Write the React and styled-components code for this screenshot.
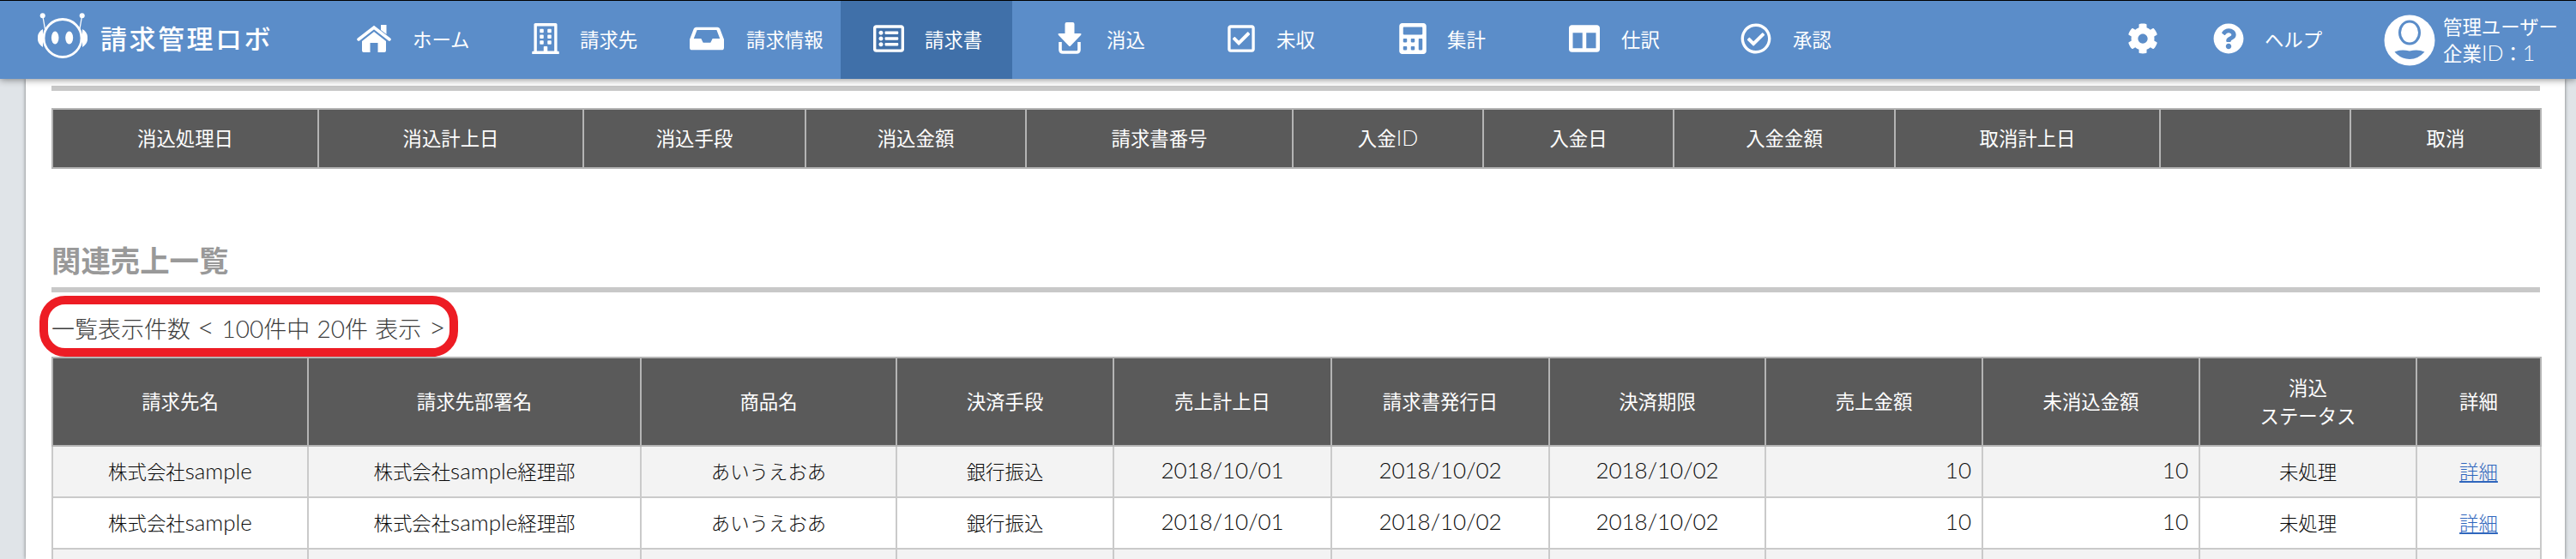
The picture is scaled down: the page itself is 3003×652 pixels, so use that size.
import React from "react";
import styled, { createGlobalStyle } from "styled-components";
import {
  FaRegBuilding,
  FaRegListAlt,
  FaRegCheckSquare,
  FaCalculator,
  FaColumns,
  FaRegCheckCircle,
  FaCog,
  FaQuestionCircle,
} from "react-icons/fa";

const GlobalStyle = createGlobalStyle`
  html, body {
    margin: 0;
    padding: 0;
    height: 652px;
    overflow: hidden;
    background: #e0e4e8;
    font-family: Lato, "Noto Sans CJK JP", sans-serif;
  }
`;

const Header = styled.header`
  position: relative;
  z-index: 2;
  height: 91px;
  display: flex;
  align-items: stretch;
  border-top: 1px solid #000;
  background: #5b8dc9;
  color: #fff;
  box-shadow: 0 1px 8px rgba(0, 0, 0, 0.45);
`;

const Logo = styled.div`
  width: 380px;
  box-sizing: border-box;
  padding: 0 0 6px 44px;
  display: flex;
  align-items: center;
  gap: 15px;
`;

const LogoText = styled.span`
  font-family: "Noto Sans CJK JP", sans-serif;
  font-size: 31px;
  font-weight: 500;
  letter-spacing: 2.5px;
  white-space: nowrap;
`;

const NavItem = styled.a`
  width: ${(props) => props.$w}px;
  box-sizing: border-box;
  padding-left: ${(props) => props.$pl || 36}px;
  padding-bottom: 4px;
  display: flex;
  align-items: center;
  gap: ${(props) => props.$gap}px;
  background: ${(props) => (props.$active ? "#4070a9" : "transparent")};
`;

const NavIcon = styled.span`
  width: 40px;
  display: flex;
  justify-content: center;
  font-size: 36px;
  line-height: 1;
`;

const NavLabel = styled.span`
  font-size: 22.4px;
  font-weight: 400;
  white-space: nowrap;
`;

const RightGroup = styled.div`
  margin-left: auto;
  padding-right: 21px;
  display: flex;
  align-items: center;
`;

const GearIcon = styled(NavIcon)`
  width: 36px;
  margin-right: 64px;
  padding-bottom: 4px;
`;

const HelpItem = styled.a`
  display: flex;
  align-items: center;
  gap: 24px;
  margin-right: 72px;
  padding-bottom: 4px;
`;

const HelpIcon = styled(NavIcon)`
  width: 36px;
`;

const User = styled.div`
  display: flex;
  align-items: center;
  gap: 9px;
`;

const UserText = styled.div`
  font-size: 22.4px;
  font-weight: 400;
  line-height: 31px;
  white-space: nowrap;
`;

const Panel = styled.main`
  margin: 0 13px 0 30px;
  padding: 8px 29px 0 30px;
  height: 552px;
  overflow: hidden;
  background: #fff;
  box-shadow: 0 0 4px rgba(0, 0, 0, 0.5);
`;

const Rule = styled.div`
  height: 6px;
  background: #c8c8c8;
`;

const Table = styled.table`
  width: 2901px;
  table-layout: fixed;
  border-collapse: collapse;
  margin-top: ${(props) => props.$mt || 0}px;
  font-size: 22.4px;
`;

const Head = styled.th`
  height: ${(props) => props.$h}px;
  padding: 0;
  background: #5a5a5a;
  border: 2px solid #b4b4b4;
  color: #fff;
  font-weight: 400;
  line-height: 33px;
`;

const Row = styled.tr`
  background: ${(props) => (props.$odd ? "#f3f3f3" : "#fff")};
`;

const Cell = styled.td`
  height: 56px;
  padding: 0 ${(props) => (props.$num ? "12px" : "0")} 2px 0;
  border: 2px solid #cacaca;
  color: #0a0a0a;
  font-weight: 300;
  text-align: ${(props) => (props.$num ? "right" : "center")};
`;

const Latin = styled.span`
  font-size: ${(props) => props.$size || 26}px;
  font-weight: 300;
  line-height: 1;
`;

const DetailLink = styled.a`
  color: #2f66bd;
  text-decoration: underline;
`;

const Title = styled.h2`
  margin: 84px 0 0;
  padding-bottom: 8px;
  border-bottom: 6px solid #c8c8c8;
  color: #999;
  font-size: 34.4px;
  font-weight: 700;
  line-height: 46px;
`;

const Pager = styled.div`
  width: fit-content;
  height: 48px;
  margin: 4px 0 0 -14px;
  padding: 3px 5px 0 4px;
  display: flex;
  align-items: center;
  border: 10px solid #ed1c24;
  border-radius: 30px;
  color: #3c3c3c;
  font-size: 27px;
  font-weight: 300;
  word-spacing: 1px;
  white-space: pre;
`;

const RobotLogo = () => (
  <svg width="58" height="58" viewBox="0 0 58 58">
    <circle cx="29" cy="29.5" r="22" fill="none" stroke="#fff" strokeWidth="2.8" />
    <path d="M6 19 A12 12 0 0 0 6 40 Z" fill="#fff" />
    <path d="M52 19 A12 12 0 0 1 52 40 Z" fill="#fff" />
    <ellipse cx="20.2" cy="29" rx="4.3" ry="7.5" fill="#fff" />
    <ellipse cx="36.7" cy="29" rx="4.5" ry="7.5" fill="#fff" />
    <circle cx="5.7" cy="3.2" r="3" fill="#fff" />
    <circle cx="51.7" cy="3.2" r="3" fill="#fff" />
    <path d="M5.7 3 L8.7 20 M51.7 3 L48.7 20" stroke="#fff" strokeWidth="1.3" />
  </svg>
);

const HomeIcon = () => (
  <svg width="40" height="32" viewBox="0 0 40 32">
    <path d="M2 17 L20 3 L38 17" fill="none" stroke="#fff" strokeWidth="3.6" strokeLinecap="round" />
    <path
      d="M6 19 L20 8 L34 19 V30 Q34 32 32 32 H24.5 V21 H15.5 V32 H8 Q6 32 6 30 Z"
      fill="#fff"
    />
    <path d="M28 0 H34.5 V11 L28 6 Z" fill="#fff" />
  </svg>
);

const InboxIcon = () => (
  <svg width="42" height="28" viewBox="0 0 42 28">
    <path
      fillRule="evenodd"
      d="M8 0 H34 Q36 0 37 2 L42 15 V25 Q42 28 39 28 H3 Q0 28 0 25 V15 L5 2 Q6 0 8 0 Z M9 3.5 L5 14 H14 L16.5 19 H25.5 L28 14 H37 L33 3.5 Z"
      fill="#fff"
    />
  </svg>
);

const ClearIcon = () => (
  <svg width="28" height="37" viewBox="0 0 28 37">
    <path
      d="M3 23 V32 Q3 35 6 35 H22 Q25 35 25 32 V23"
      fill="none"
      stroke="#fff"
      strokeWidth="3.6"
    />
    <path
      d="M8.5 2 Q8.5 0 10.5 0 H17.5 Q19.5 0 19.5 2 V13 H26 Q28.5 13 27 15 L15 27.5 Q14 28.5 13 27.5 L1 15 Q-0.5 13 2 13 H8.5 Z"
      fill="#fff"
    />
  </svg>
);

const AvatarIcon = () => (
  <svg width="60" height="60" viewBox="0 0 60 60">
    <circle cx="30" cy="30" r="29.5" fill="#fff" />
    <ellipse cx="30" cy="21" rx="11.5" ry="13" fill="none" stroke="#5b8dc9" strokeWidth="3" />
    <path
      d="M12.5 43.5 Q20 40 30 42.5 Q40 40 47.5 43.5 Q40 52 30 52 Q20 52 12.5 43.5 Z"
      fill="#5b8dc9"
    />
  </svg>
);

const navItems = [
  { label: "ホーム", icon: <HomeIcon />, w: 200, gap: 25 },
  { label: "請求先", icon: <FaRegBuilding />, w: 188, gap: 20 },
  { label: "請求情報", icon: <InboxIcon />, w: 212, gap: 26 },
  { label: "請求書", icon: <FaRegListAlt />, w: 200, gap: 22, active: true },
  { label: "消込", icon: <ClearIcon />, w: 211, gap: 23, pl: 47 },
  { label: "未収", icon: <FaRegCheckSquare />, w: 200, gap: 21 },
  { label: "集計", icon: <FaCalculator />, w: 200, gap: 20 },
  { label: "仕訳", icon: <FaColumns />, w: 200, gap: 23 },
  { label: "承認", icon: <FaRegCheckCircle />, w: 200, gap: 23 },
];

const clearingCols = [
  ["消込処理日", 310],
  ["消込計上日", 309],
  ["消込手段", 259],
  ["消込金額", 257],
  ["請求書番号", 311],
  [
    <>
      入金<Latin $size={25}>ID</Latin>
    </>,
    222,
  ],
  ["入金日", 222],
  ["入金金額", 258],
  ["取消計上日", 309],
  ["", 222],
  ["取消", 222],
];

const salesCols = [
  ["請求先名", 298],
  ["請求先部署名", 388],
  ["商品名", 298],
  ["決済手段", 253],
  ["売上計上日", 254],
  ["請求書発行日", 254],
  ["決済期限", 252],
  ["売上金額", 253],
  ["未消込金額", 253],
  [
    <>
      消込
      <br />
      ステータス
    </>,
    253,
  ],
  ["詳細", 145],
];

const salesRows = [1, 2];

const App = () => {
  return (
    <>
      <GlobalStyle />
      <Header>
        <Logo>
          <RobotLogo />
          <LogoText>請求管理ロボ</LogoText>
        </Logo>
        {navItems.map((item) => (
          <NavItem
            key={item.label}
            $w={item.w}
            $gap={item.gap}
            $pl={item.pl}
            $active={item.active}
          >
            <NavIcon>{item.icon}</NavIcon>
            <NavLabel>{item.label}</NavLabel>
          </NavItem>
        ))}
        <RightGroup>
          <GearIcon>
            <FaCog />
          </GearIcon>
          <HelpItem>
            <HelpIcon>
              <FaQuestionCircle />
            </HelpIcon>
            <NavLabel>ヘルプ</NavLabel>
          </HelpItem>
          <User>
            <AvatarIcon />
            <UserText>
              管理ユーザー
              <br />
              企業<Latin $size={25}>ID</Latin>：<Latin $size={25}>1</Latin>
            </UserText>
          </User>
        </RightGroup>
      </Header>
      <Panel>
        <Rule />
        <Table $mt={20}>
          <colgroup>
            {clearingCols.map(([, w], i) => (
              <col key={i} width={w} />
            ))}
          </colgroup>
          <thead>
            <tr>
              {clearingCols.map(([name], i) => (
                <Head key={i} $h={67}>
                  {name}
                </Head>
              ))}
            </tr>
          </thead>
        </Table>
        <Title>関連売上一覧</Title>
        <Pager>
          <span>
            一覧表示件数 <Latin $size={34}>&lt;</Latin> <Latin $size={28}>100</Latin>件中{" "}
            <Latin $size={28}>20</Latin>件 表示 <Latin $size={34}>&gt;</Latin>
          </span>
        </Pager>
        <Table>
          <colgroup>
            {salesCols.map(([, w], i) => (
              <col key={i} width={w} />
            ))}
          </colgroup>
          <thead>
            <tr>
              {salesCols.map(([name], i) => (
                <Head key={i} $h={101}>
                  {name}
                </Head>
              ))}
            </tr>
          </thead>
          <tbody>
            {salesRows.map((n) => (
              <Row key={n} $odd={n % 2 === 1}>
                <Cell>
                  株式会社<Latin>sample</Latin>
                </Cell>
                <Cell>
                  株式会社<Latin>sample</Latin>経理部
                </Cell>
                <Cell>あいうえおあ</Cell>
                <Cell>銀行振込</Cell>
                <Cell>
                  <Latin>2018/10/01</Latin>
                </Cell>
                <Cell>
                  <Latin>2018/10/02</Latin>
                </Cell>
                <Cell>
                  <Latin>2018/10/02</Latin>
                </Cell>
                <Cell $num>
                  <Latin>10</Latin>
                </Cell>
                <Cell $num>
                  <Latin>10</Latin>
                </Cell>
                <Cell>未処理</Cell>
                <Cell>
                  <DetailLink href="#">詳細</DetailLink>
                </Cell>
              </Row>
            ))}
            <Row $odd>
              {salesCols.map((_, i) => (
                <Cell key={i} />
              ))}
            </Row>
          </tbody>
        </Table>
      </Panel>
    </>
  );
};

export default App;
